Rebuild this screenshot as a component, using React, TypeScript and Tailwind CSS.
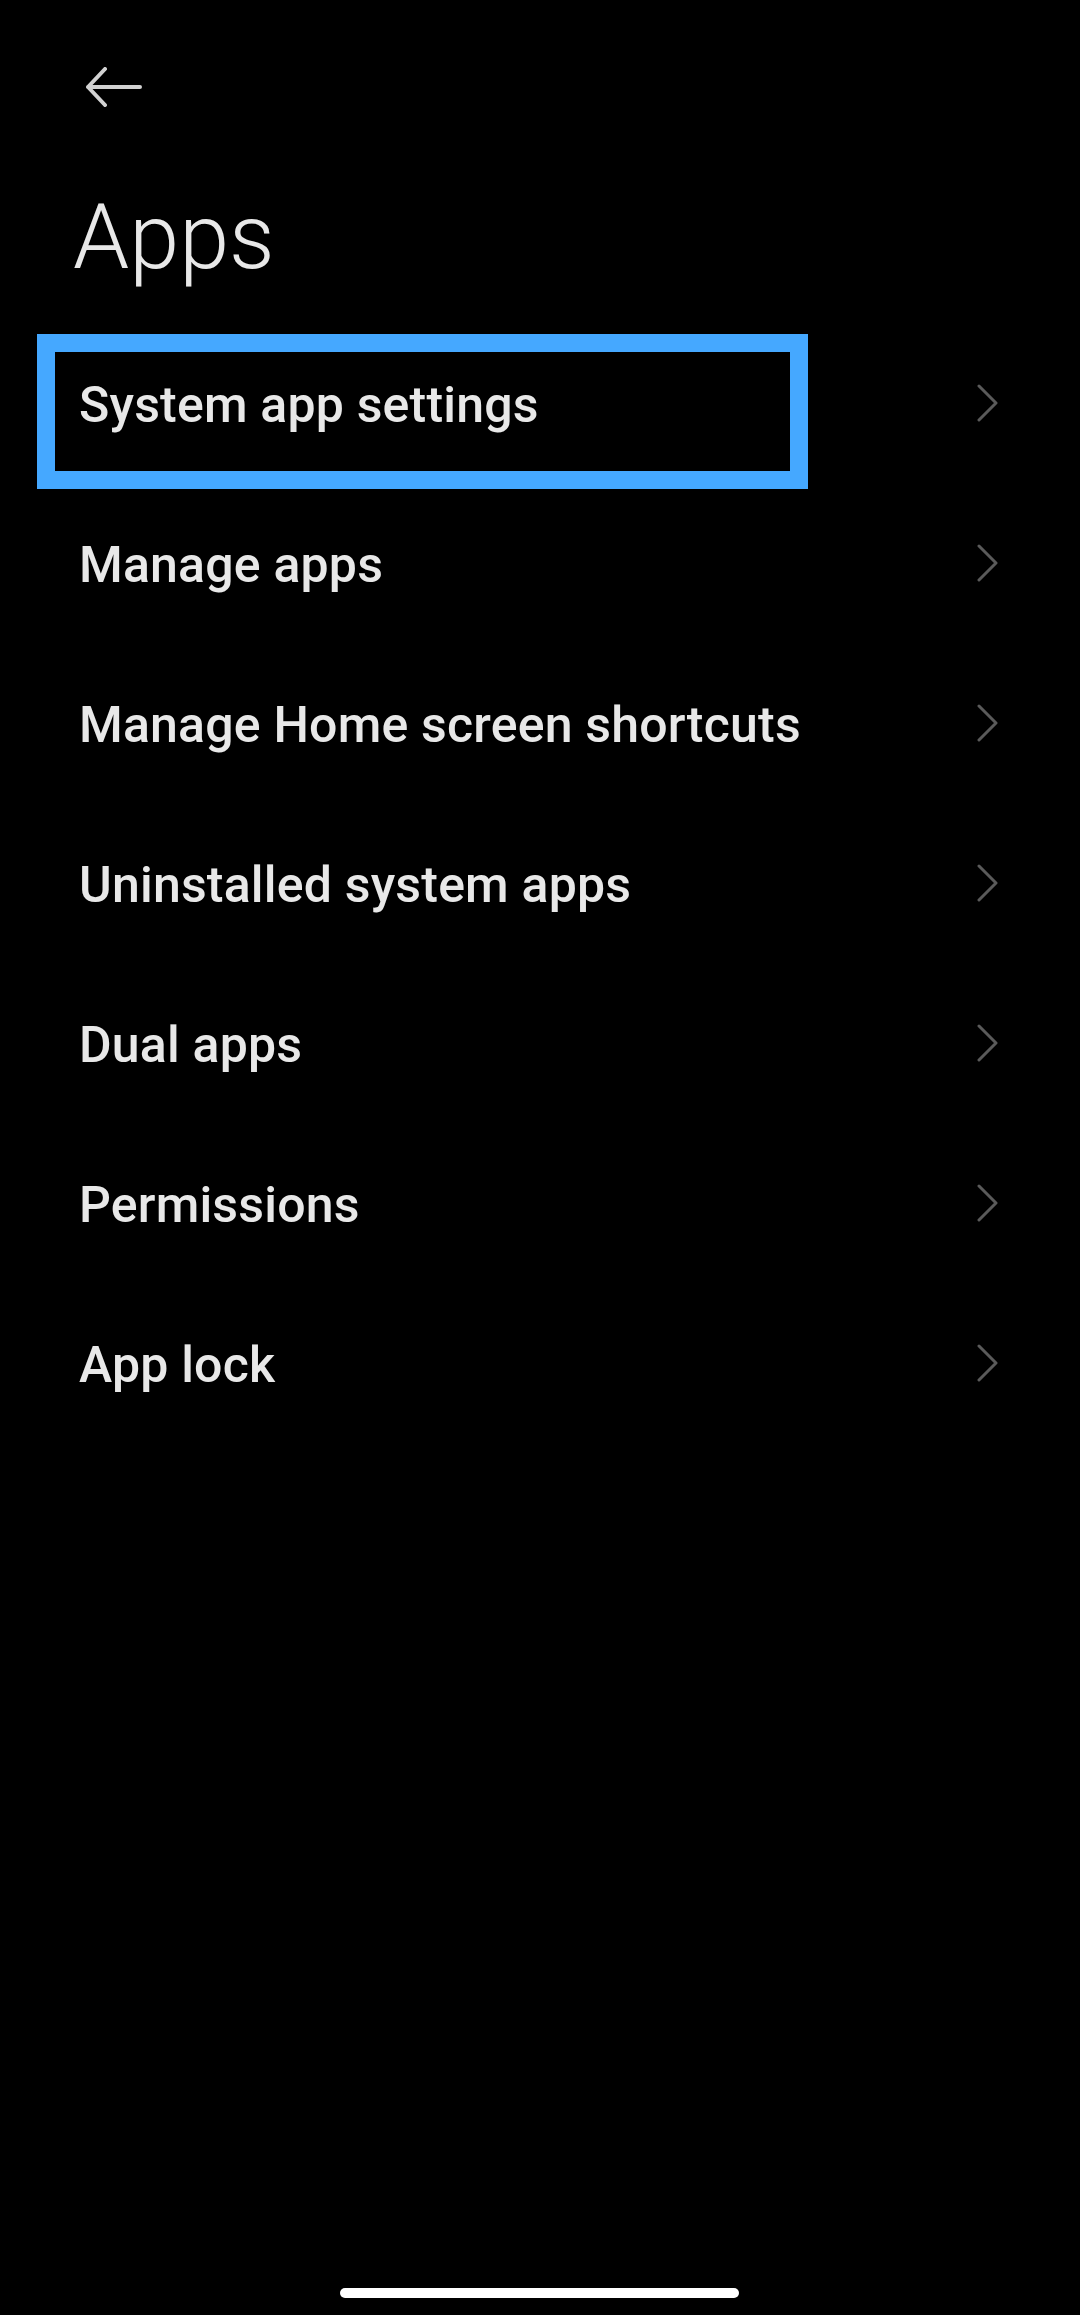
const ITEMS = [
  "System app settings",
  "Manage apps",
  "Manage Home screen shortcuts",
  "Uninstalled system apps",
  "Dual apps",
  "Permissions",
  "App lock",
];

function Chevron() {
  return (
    <svg width="22" height="38" viewBox="0 0 22 38" fill="none" aria-hidden="true">
      <path d="M2 2 L19 19 L2 36" stroke="#5a5a5a" strokeWidth="3" strokeLinecap="round" strokeLinejoin="round" />
    </svg>
  );
}

export default function App() {
  return (
    <div
      className="relative h-[2315px] w-[1080px] overflow-hidden bg-black"
      style={{ fontFamily: "Roboto, 'Noto Sans', sans-serif" }}
    >
      {/* Toolbar */}
      <div className="pl-[86px] pt-[67px]">
        <svg width="56" height="40" viewBox="0 0 56 40" fill="none" aria-hidden="true">
          <path
            d="M19 2 L2 20 L19 38 M2 20 H54"
            stroke="#d2d2d2"
            strokeWidth="4"
            strokeLinecap="round"
            strokeLinejoin="round"
          />
        </svg>
      </div>

      <h1 className="mt-[86px] pl-[73px] text-[90px] leading-[90px] font-light text-[#e8e8e8]">Apps</h1>

      {/* List */}
      <div className="mt-[40px]">
        {ITEMS.map((label, i) => (
          <div key={label} className="relative flex h-[160px] items-center justify-between pr-[81px] pl-[79px]">
            <span className="pt-[4px] text-[50px] leading-none font-medium tracking-[0.2px] text-[#e8e8e8]">
              {label}
            </span>
            <Chevron />
            {i === 0 && (
              <div className="pointer-events-none absolute top-[11px] left-[37px] h-[155px] w-[771px] border-[18px] border-[#45a8ff]" />
            )}
          </div>
        ))}
      </div>

      {/* Gesture bar */}
      <div className="absolute top-[2288px] left-[340px] h-[10px] w-[399px] rounded-full bg-white" />
    </div>
  );
}
